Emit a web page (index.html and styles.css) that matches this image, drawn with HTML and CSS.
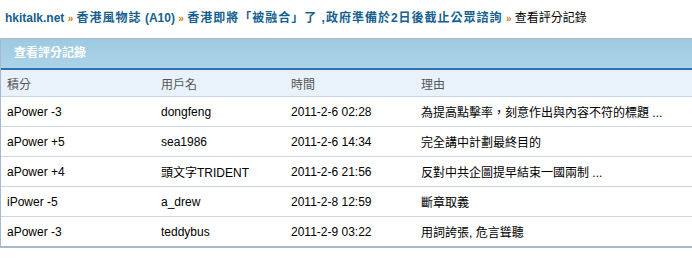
FILE: index.html
```html
<!DOCTYPE html>
<html lang="zh-Hant">
<head>
<meta charset="utf-8">
<link rel="stylesheet" href="styles.css">
</head>
<body>
<div class="crumbs">
  <a href="#">hkitalk.net</a> <span class="sep">»</span> <a href="#"><span class="cjk">香港風物誌</span> (A10)</a> <span class="sep">»</span> <a href="#" class="cjk">香港即將「被融合」了 ,政府準備於2日後截止公眾諮詢</a> <span class="sep">»</span> <span class="cur">查看評分記錄</span>
</div>
<div class="box">
  <h3 class="box-title">查看評分記錄</h3>
  <table class="log">
    <colgroup><col class="c1"><col class="c2"><col class="c3"><col></colgroup>
    <thead>
      <tr><th>積分</th><th>用戶名</th><th>時間</th><th>理由</th></tr>
    </thead>
    <tbody>
      <tr><td>aPower -3</td><td>dongfeng</td><td>2011-2-6 02:28</td><td>為提高點擊率，刻意作出與內容不符的標題 ...</td></tr>
      <tr><td>aPower +5</td><td>sea1986</td><td>2011-2-6 14:34</td><td>完全講中計劃最終目的</td></tr>
      <tr><td>aPower +4</td><td>頭文字TRIDENT</td><td>2011-2-6 21:56</td><td>反對中共企圖提早結束一國兩制 ...</td></tr>
      <tr><td>iPower -5</td><td>a_drew</td><td>2011-2-8 12:59</td><td>斷章取義</td></tr>
      <tr><td>aPower -3</td><td>teddybus</td><td>2011-2-9 03:22</td><td>用詞誇張, 危言聳聽</td></tr>
    </tbody>
  </table>
</div>
</body>
</html>
```
FILE: styles.css
```css
html, body {
  margin: 0;
  padding: 0;
  background: #fff;
  overflow: hidden;
}
body {
  font-family: "Liberation Sans", Arial, "Noto Sans CJK TC", sans-serif;
  font-size: 12px;
  color: #000;
}
.crumbs {
  height: 38px;
  line-height: 36px;
  padding-left: 5px;
  white-space: nowrap;
  font-weight: bold;
  color: #000;
}
.crumbs a {
  color: #15608f;
  text-decoration: none;
}
.crumbs .cjk {
  letter-spacing: 1px;
}
.crumbs .sep {
  font-size: 10px;
  color: #c97d1d;
  font-weight: bold;
}
.crumbs .cur {
  font-weight: normal;
}
.box {
  width: 720px;
  border-top: 1px solid #b4bcc6;
  border-left: 1px solid #a9b9cc;
  border-bottom: 2px solid #a4b8d0;
}
.box-title {
  margin: 0;
  height: 29px;
  line-height: 29px;
  padding-left: 13px;
  font-size: 12px;
  font-weight: bold;
  color: #fff;
  background: linear-gradient(#9dcae2, #acd3e8);
  border-bottom: 2px solid #2c73b4;
}
.log {
  width: 100%;
  border-collapse: collapse;
  table-layout: fixed;
}
.log .c1 { width: 154px; }
.log .c2 { width: 130px; }
.log .c3 { width: 130px; }
.log th {
  text-align: left;
  font-weight: normal;
  color: #555;
  background: #e9f2fb;
  height: 26px;
  padding: 0 0 0 6px;
  border-bottom: 1px solid #c4d6e8;
}
.log td {
  height: 29px;
  padding: 0 0 0 6px;
  border-bottom: 1px solid #c9d6e4;
  white-space: nowrap;
}
.log tbody tr:last-child td {
  border-bottom: none;
}
```
